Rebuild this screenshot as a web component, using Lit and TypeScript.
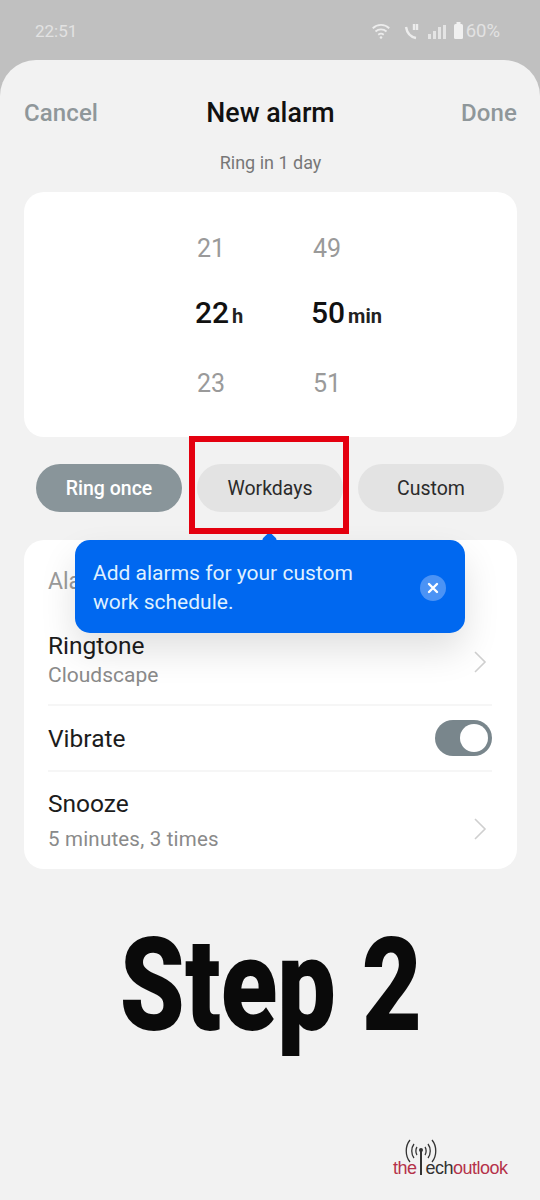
import { LitElement, html, css, svg } from "lit";
import { customElement } from "lit/decorators.js";

const chevron = (cls: string) => html`<svg class="chev ${cls}" width="14" height="24" viewBox="0 0 14 24"><path d="M2 2 L12 12 L2 22" fill="none" stroke="#cfcfcf" stroke-width="1.6"/></svg>`;

@customElement("app-root")
export class AppRoot extends LitElement {
  static styles = css`
    :host { display: block; width: 540px; height: 1200px; background: #c0c0c0; font-family: Roboto, "Noto Sans", sans-serif; overflow: hidden; position: relative; color: #1a1a1a; }
    .status { height: 60px; box-sizing: border-box; padding: 2px 40px 0 35px; display: flex; align-items: center; justify-content: space-between; color: #e2e2e2; font-size: 17px; }
    .status .right { display: flex; align-items: center; gap: 4px; }
    .status .wifi { margin-right: 7px; }
    .status .pct { font-size: 18.5px; margin-left: -2px; }
    .sheet { background: #f2f2f2; height: 1140px; border-radius: 36px 36px 0 0; box-sizing: border-box; padding: 0 23px 0 24px; display: flex; flex-direction: column; }
    .head { display: grid; grid-template-columns: 1fr auto 1fr; align-items: center; height: 34px; margin-top: 36px; }
    .head .side { color: #8f979a; font-weight: 500; font-size: 24px; letter-spacing: .1px; }
    .head .side.r { text-align: right; }
    .head .title { color: #111; font-weight: 500; font-size: 26.8px; }
    .sub { text-align: center; color: #777; font-size: 18px; margin-top: 22px; height: 22px; line-height: 22px; }
    .picker { margin-top: 18px; background: #fff; border-radius: 20px; height: 245px; box-sizing: border-box; padding-top: 37px; padding-left: 148px; display: flex; }
    .col { width: 116px; display: flex; flex-direction: column; }
    .n { height: 40px; line-height: 40px; font-size: 25px; color: #9a9a9a; width: 78px; text-align: center; }
    .cur { height: 40px; line-height: 40px; margin: 24px 0 31px; padding-left: 23px; font-weight: 500; font-size: 30px; color: #111; white-space: nowrap; display: flex; align-items: baseline; gap: 3px; }
    .cur small { font-size: 20px; font-weight: 700; color: #222; }
    .chips { display: flex; justify-content: space-between; padding: 0 13px 0 12px; margin-top: 27px; }
    .chip { width: 146px; height: 48px; border-radius: 24px; background: #e3e3e3; color: #2b2b2b; font-size: 19.5px; display: flex; align-items: center; justify-content: center; }
    .chip.on { background: #89959a; color: #fff; font-weight: 500; }
    .list { margin-top: 28px; background: #fff; border-radius: 20px; height: 329px; box-sizing: border-box; padding: 0 25px 0 24px; display: flex; flex-direction: column; }
    .row { display: flex; align-items: center; justify-content: space-between; }
    .r0 { height: 79px; color: #9a9a9a; font-size: 23px; padding-top: 4px; box-sizing: border-box; }
    .r1 { height: 87px; border-bottom: 2px solid #f6f6f6; box-sizing: border-box; }
    .r1 .txt { position: relative; top: -2px; }
    .r2 { height: 66px; border-bottom: 2px solid #f6f6f6; box-sizing: border-box; }
    .r2 .t { position: relative; top: 1px; }
    .r3 { flex: 1; }
    .t { font-size: 24.5px; line-height: 30px; color: #1c1c1c; }
    .d { font-size: 21px; line-height: 28px; color: #8a8a8a; }
    .r3 .d { margin-top: 6px; font-size: 20.5px; letter-spacing: .2px; }
    .r3 .txt { position: relative; top: 0; }
    .toggle { width: 57px; height: 36px; border-radius: 18px; background: #79868c; box-sizing: border-box; padding: 4px; display: flex; justify-content: flex-end; }
    .toggle i { width: 28px; height: 28px; border-radius: 50%; background: #fff; display: block; }
    .chev { position: relative; left: -5px; }
    .chev.a { top: 0; }
    .chev.b { top: 8px; }
    .step { flex: 1; display: flex; justify-content: center; }
    .step span { display: inline-block; font-size: 130px; line-height: 150px; font-weight: 900; color: #0a0a0a; transform: scaleX(.8); white-space: nowrap; margin-top: 42px; height: 150px; }
    .tip { position: absolute; left: 75px; top: 540px; width: 390px; height: 93px; border-radius: 15px; background: #0068f0; color: #dff0ff; box-shadow: 0 18px 36px rgba(0,0,0,.12); box-sizing: border-box; padding: 19px 18px 17px; display: flex; align-items: center; justify-content: space-between; font-size: 21px; line-height: 29px; }
    .tip::before { content: ""; position: absolute; left: 189px; top: -6px; width: 11px; height: 11px; background: #0068f0; transform: rotate(45deg); border-radius: 2px; }
    .x { width: 26px; height: 26px; border-radius: 50%; background: #4b93f5; display: flex; align-items: center; justify-content: center; margin-right: 1px; }
    .red { position: absolute; left: 189px; top: 436px; width: 160px; height: 98px; box-sizing: border-box; border: 6px solid #e4000f; }
    .mark { position: absolute; left: 393px; top: 1139px; width: 120px; height: 40px; }
    .mark svg { position: absolute; left: 6px; top: 0; }
    .mark .w { position: absolute; left: 0; top: 19px; font-family: "Liberation Sans", sans-serif; font-size: 18px; line-height: 20px; color: #b5324a; letter-spacing: -.5px; white-space: nowrap; }
    .mark .w b { font-weight: 400; color: #333; }
  `;

  render() {
    return html`
      <div class="status">
        <span>22:51</span>
        <span class="right">
          <svg class="wifi" width="22" height="22" viewBox="0 0 24 22" fill="none" stroke="#ececec" stroke-width="2"><path d="M3 8a13 13 0 0 1 18 0M6 11.500a9 9 0 0 1 12 0M9 15a5 5 0 0 1 6 0"/><circle cx="12" cy="18" r="1.400" fill="#ececec" stroke="none"/></svg>
          <svg width="20" height="22" viewBox="0 0 20 22" fill="none" stroke="#ececec" stroke-width="2.400"><path d="M3 7c1 6 5 10 10 11M11 4v6M14 4v6"/></svg>
          <svg width="22" height="22" viewBox="0 0 22 22" fill="#e4e4e4"><rect x="1" y="14" width="3" height="5"/><rect x="6" y="11" width="3" height="8"/><rect x="11" y="7" width="3" height="12"/><rect x="16" y="5" width="3" height="14"/></svg>
          <svg width="11" height="22" viewBox="0 0 11 22"><rect x="1" y="4" width="9" height="15" rx="1.500" fill="#f0f0f0"/><rect x="3.500" y="2" width="4" height="2" fill="#f0f0f0"/></svg>
          <span class="pct">60%</span>
        </span>
      </div>
      <div class="sheet">
        <div class="head"><span class="side">Cancel</span><span class="title">New alarm</span><span class="side r">Done</span></div>
        <div class="sub">Ring in 1 day</div>
        <div class="picker">
          <div class="col"><div class="n">21</div><div class="cur">22<small>h</small></div><div class="n">23</div></div>
          <div class="col"><div class="n">49</div><div class="cur">50<small>min</small></div><div class="n">51</div></div>
        </div>
        <div class="chips">
          <div class="chip on">Ring once</div>
          <div class="chip">Workdays</div>
          <div class="chip">Custom</div>
        </div>
        <div class="list">
          <div class="row r0">Alarm sound</div>
          <div class="row r1"><div class="txt"><div class="t">Ringtone</div><div class="d">Cloudscape</div></div>${chevron("a")}</div>
          <div class="row r2"><div class="t">Vibrate</div><div class="toggle"><i></i></div></div>
          <div class="row r3"><div class="txt"><div class="t">Snooze</div><div class="d">5 minutes, 3 times</div></div>${chevron("b")}</div>
        </div>
        <div class="step"><span>Step 2</span></div>
      </div>
      <div class="tip">
        <div>Add alarms for your custom<br />work schedule.</div>
        <div class="x"><svg width="12" height="12" viewBox="0 0 12 12"><path d="M2 2 L10 10 M10 2 L2 10" stroke="#fff" stroke-width="2.400" stroke-linecap="round"/></svg></div>
      </div>
      <div class="red"></div>
      <div class="mark">
        <svg width="40" height="36" viewBox="0 0 40 36" fill="none" stroke="#333" stroke-width="1.300">
          ${svg`<path d="M11 1c-5 6-5 16 0 22M33 1c5 6 5 16 0 22M15 5c-3 4-3 10 0 14M29 5c3 4 3 10 0 14M18 8c-1.500 2-1.500 6 0 8M26 8c1.500 2 1.500 6 0 8"/><path d="M22 11v25" stroke-width="2"/><circle cx="22" cy="11" r="2" fill="#333" stroke="none"/>`}
        </svg>
        <div class="w">the <b>&nbsp;ech</b>outlook</div>
      </div>
    `;
  }
}
